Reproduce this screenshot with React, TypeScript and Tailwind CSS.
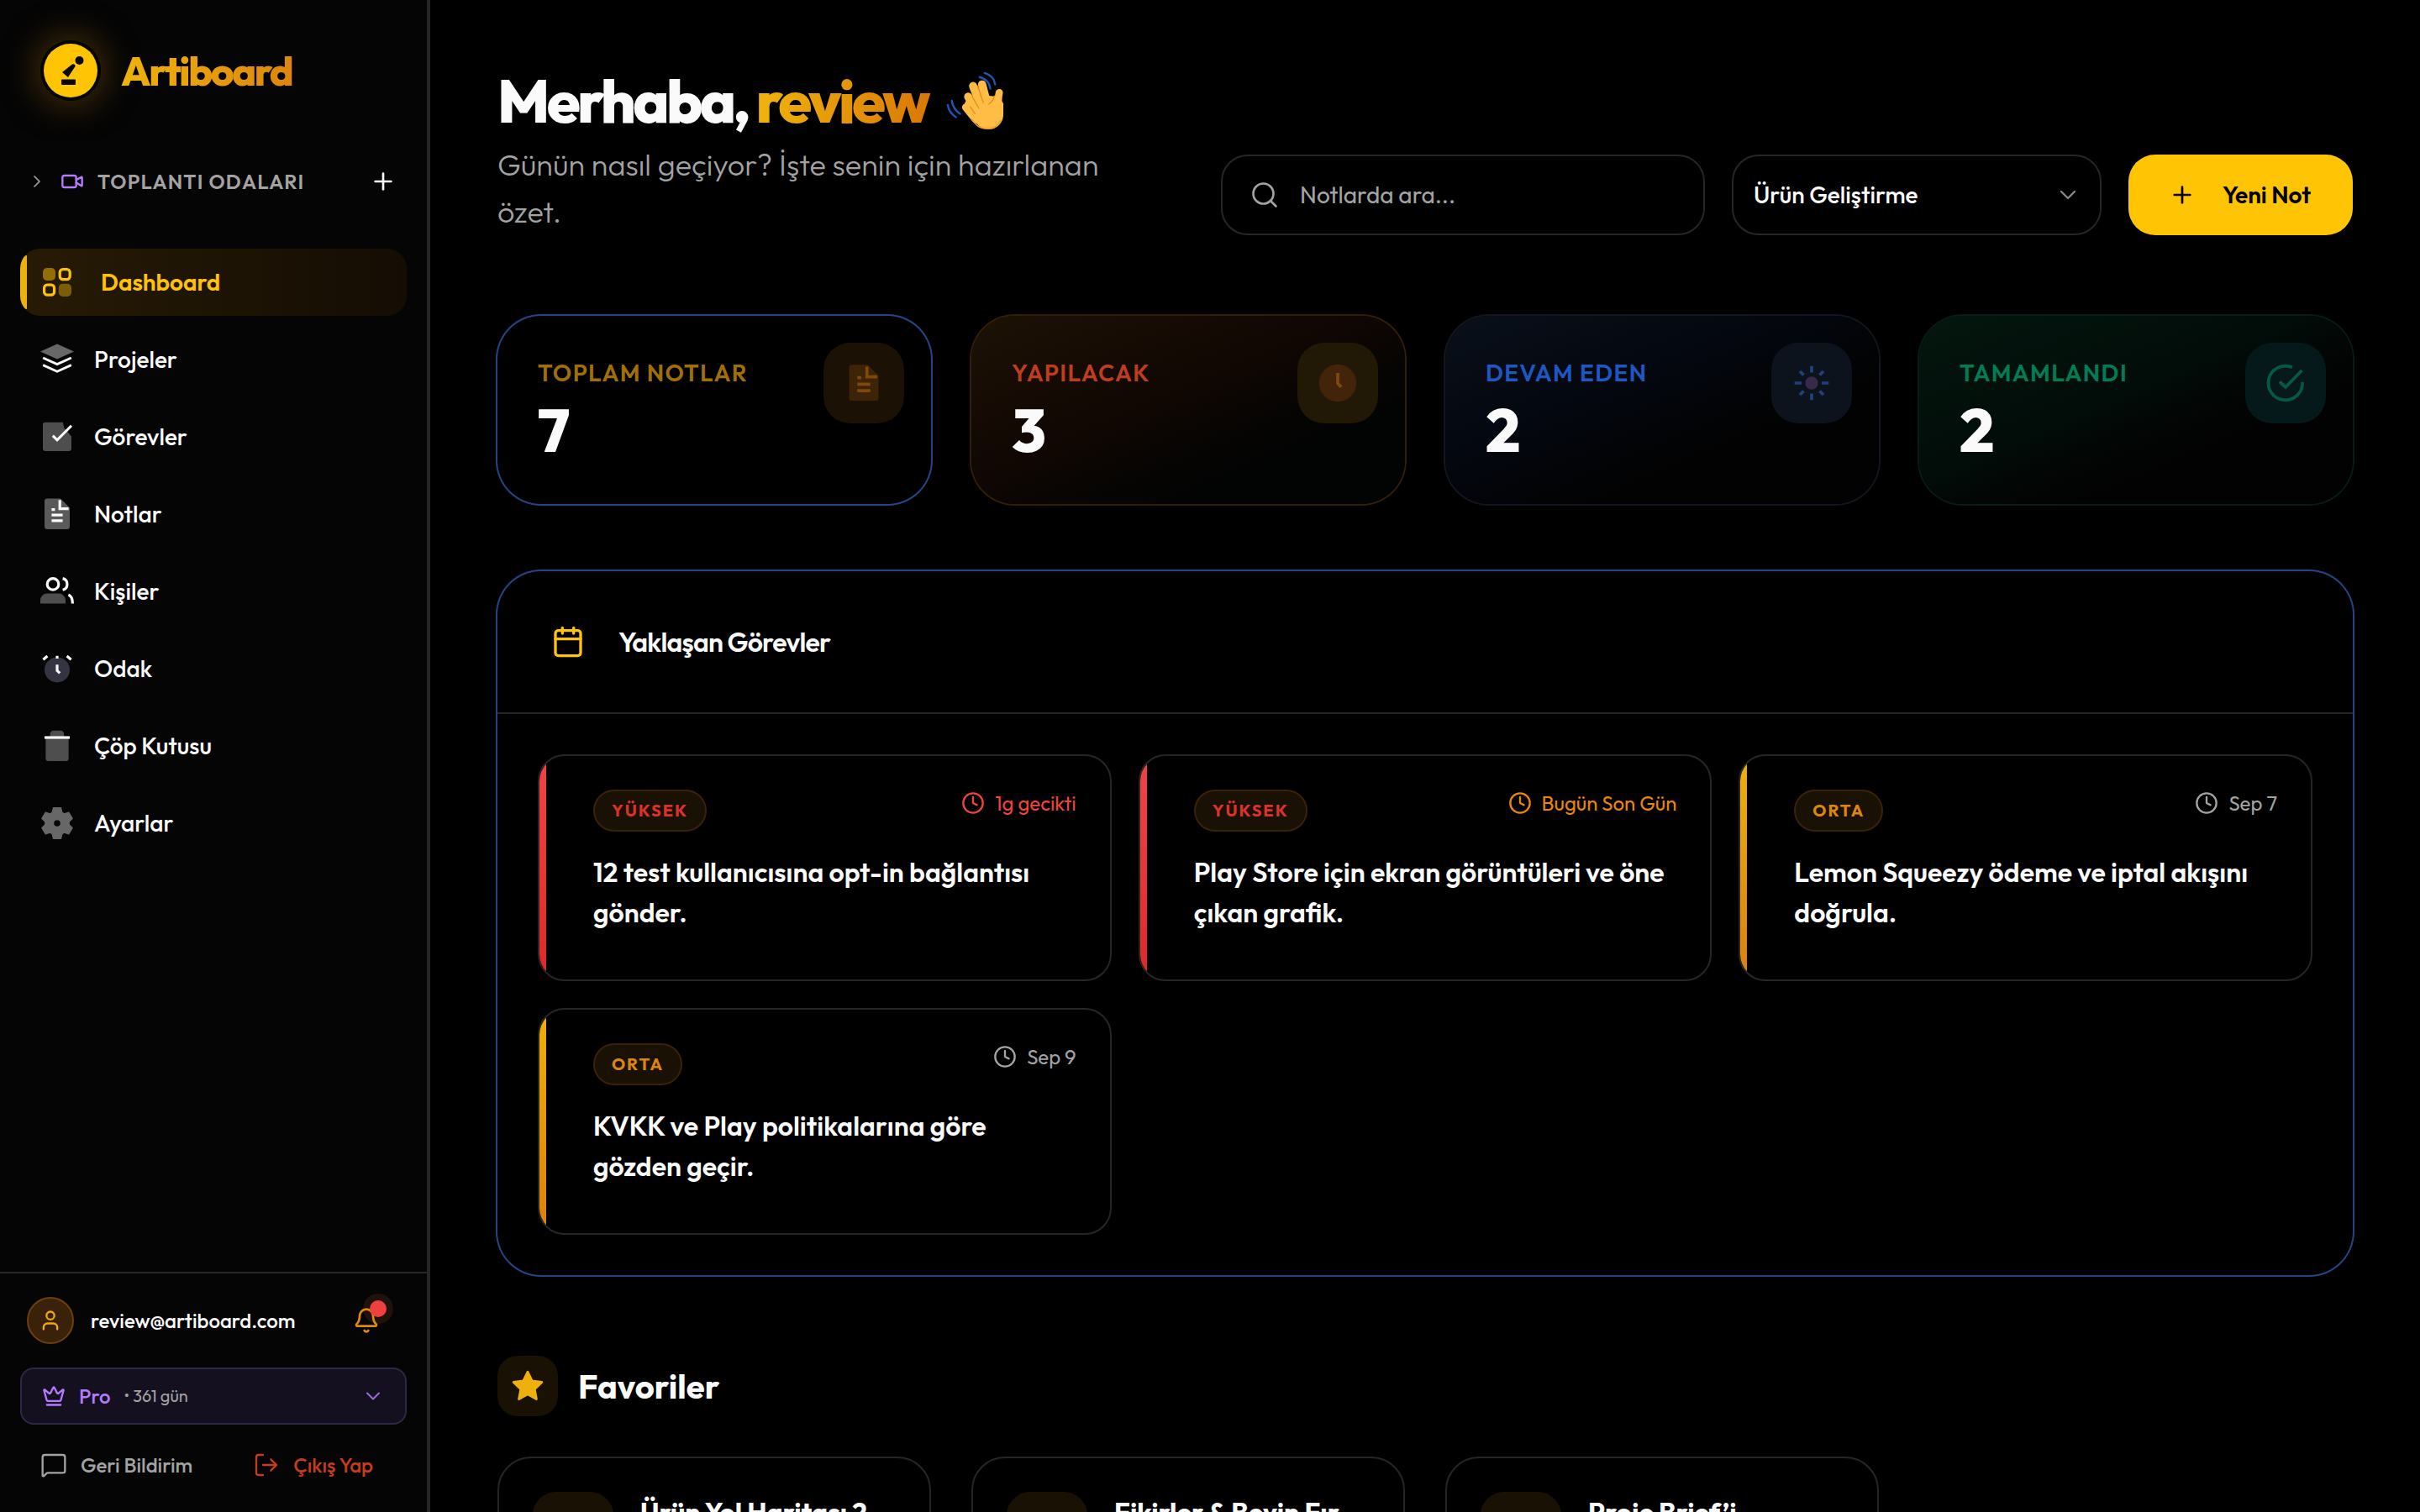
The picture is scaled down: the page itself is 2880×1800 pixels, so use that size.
import type { ReactNode } from 'react';
import {
  Bell,
  Calendar,
  ChevronDown,
  ChevronRight,
  Clock,
  Crown,
  LogOut,
  MessageSquare,
  Plus,
  Search,
  User,
  Video,
} from 'lucide-react';

function Duo({ size = 'size-12', children }: { size?: string; children: ReactNode }) {
  return (
    <svg viewBox="0 0 24 24" fill="none" stroke="none" aria-hidden="true" className={`${size} shrink-0`}>
      {children}
    </svg>
  );
}

const line = { stroke: 'currentColor', strokeWidth: 1.6, fill: 'none' };

function DashboardIcon() {
  return (
    <Duo>
      <rect x="3.5" y="3.5" width="7.5" height="7.5" rx="2.4" fill="currentColor" opacity="0.5" />
      <rect x="13.6" y="4.3" width="6" height="6" rx="1.8" {...line} />
      <rect x="4.3" y="13.6" width="6" height="6" rx="1.8" {...line} />
      <rect x="12.9" y="12.9" width="7.6" height="7.6" rx="2.4" fill="currentColor" opacity="0.4" />
    </Duo>
  );
}

function LayersIcon() {
  return (
    <Duo>
      <path d="M12 2.8 22 7.2 12 11.8 2 7.2Z" fill="currentColor" opacity="0.4" />
      <path d="m3.6 11 8.4 3.8 8.4-3.8M3.6 15.3l8.4 3.8 8.4-3.8" {...line} strokeWidth="1.4" />
    </Duo>
  );
}

function CheckIcon() {
  return (
    <Duo>
      <path
        d="M5 3.4h10.4l.8 3.3 2.6 3 1.7 2V19a1.5 1.5 0 0 1-1.5 1.5H5A1.5 1.5 0 0 1 3.5 19V5A1.5 1.5 0 0 1 5 3.4Z"
        fill="currentColor"
        opacity="0.3"
      />
      <path d="m9.4 11.3 2.6 2.6 8.5-8.5" {...line} strokeWidth="1.5" />
    </Duo>
  );
}

function NoteIcon({ size }: { size?: string }) {
  return (
    <Duo size={size}>
      <path
        d="M6 2.7h8l5.5 5.5v11.3A1.5 1.5 0 0 1 18 21H6a1.5 1.5 0 0 1-1.5-1.5V4.2A1.5 1.5 0 0 1 6 2.7Z"
        fill="currentColor"
        opacity="0.35"
      />
      <path d="M13.6 3.6v5.2h5.2M8.7 9.3h2M8.7 12.6h6.6M8.7 15.9h6.6" {...line} />
    </Duo>
  );
}

function PeopleIcon() {
  return (
    <Duo>
      <path d="M2 19.3v-2a4 4 0 0 1 4-4h7a4 4 0 0 1 4 4v2Z" fill="currentColor" opacity="0.3" />
      <circle cx="9.5" cy="7.7" r="3.4" {...line} />
      <path d="M15.3 4.3a3.5 3.5 0 0 1 0 6.8M18.7 14c1.5.6 2.5 2.3 2.5 5.3" {...line} />
    </Duo>
  );
}

function AlarmIcon() {
  return (
    <Duo>
      <circle cx="12" cy="12.7" r="7.5" fill="#a1a1d0" opacity="0.3" />
      <path d="M12 9.6v3.6l1.6 1.5M12 4.4V6M3.7 6.6l2.5-2.1M20.3 6.6l-2.5-2.1" {...line} />
    </Duo>
  );
}

function TrashIcon() {
  return (
    <Duo>
      <path
        d="M7.8 7V5a2.1 2.1 0 0 1 2.1-2.1H14A2.1 2.1 0 0 1 16.1 5v2h2.7v12.5a1.5 1.5 0 0 1-1.5 1.5H6.7a1.5 1.5 0 0 1-1.5-1.5V7Z"
        fill="currentColor"
        opacity="0.3"
      />
      <path d="M4.5 7h15" {...line} />
    </Duo>
  );
}

function GearIcon() {
  return (
    <Duo>
      <path
        fillRule="evenodd"
        clipRule="evenodd"
        d="M9.7 2.8h4.6l.6 2.8 1.3.8 2.7-.9 2.2 3.7-2 2v1.6l2 2-2.2 3.7-2.7-.9-1.3.8-.6 2.8H9.7l-.6-2.8-1.3-.8-2.7.9-2.2-3.7 2-2v-1.6l-2-2 2.2-3.7 2.7.9 1.3-.8Zm2.3 7a2.2 2.2 0 1 0 0 4.4 2.2 2.2 0 0 0 0-4.4Z"
        fill="currentColor"
        stroke="currentColor"
        strokeWidth="0.6"
        strokeLinejoin="round"
        opacity="0.4"
      />
    </Duo>
  );
}

function ClockDuo() {
  return (
    <Duo size="size-14">
      <circle cx="12" cy="12" r="9.5" fill="#43240a" />
      <path d="M12 6.9v5.3l1.8 1.8" stroke="#80480b" strokeWidth="1.6" />
    </Duo>
  );
}

function SunDuo() {
  return (
    <Duo size="size-14">
      <circle cx="12" cy="12" r="3.3" fill="#3a2a4a" />
      <path
        d="M12 3.3v3.3M12 17.4v3.3M3.3 12h3.5M17.2 12h3.5M6 6l1.9 1.9M16.1 16.1 18 18M6 18l1.9-1.9M16.1 7.9 18 6"
        stroke="#21407f"
        strokeWidth="1.6"
      />
    </Duo>
  );
}

function DoneDuo() {
  return (
    <Duo size="size-14">
      <path d="M20.6 11.5A8.7 8.7 0 1 1 15.4 4" stroke="#045a42" strokeWidth="1.6" />
      <path d="m9 11.3 3 2.9 8.3-8.6" stroke="#045a42" strokeWidth="1.6" />
    </Duo>
  );
}

function WavingHand() {
  return (
    <svg viewBox="0 0 74 76" fill="none" strokeLinecap="round" aria-hidden="true" className="h-19 w-18 shrink-0">
      <g stroke="#1e56b5" strokeWidth="2.5">
        <path d="M49 4c7 2 12 7 13 14M43 9c7 2 12 7 13 14" />
        <path d="M9 38c1 7 4 12 10 16M4 43c1 7 4 11 10 15" />
      </g>
      <path d="M24 45c0-10 14-15 24-14l18 2 6 8v14c0 10-8 18-18 18-9 0-13-5-18-11Z" fill="#ffbd45" />
      <g stroke="#ffbd45" strokeWidth="10">
        <path d="m46 18 7 27" />
        <path d="m35 20 11 28" />
        <path d="m29 33 13 22" />
        <path d="m26 46 12 15" strokeWidth="9" />
        <path d="M67 28c-2 8-1 16-1 24" strokeWidth="9" />
      </g>
      <g stroke="#e8921a" strokeWidth="1.5">
        <path d="m40.5 20 7 20M34 33l8 14M31.5 45l6 9M61 32c-1 5-3 8-7 10" />
      </g>
      <path d="M33 60c5 7 9 12 19 12 8 0 14-4 17-10" stroke="#f09b2a" strokeWidth="1.5" />
    </svg>
  );
}

function LogoMark() {
  return (
    <svg viewBox="0 0 72 72" aria-hidden="true" className="size-18 rounded-full shadow-[0_0_40px_4px_#4a310a]">
      <circle cx="36" cy="36" r="36" fill="#050505" />
      <circle cx="36" cy="36" r="32" fill="#ffc403" />
      <circle cx="46.5" cy="24" r="5" fill="#0a0700" />
      <path d="m26 38 12-9.5c2-1 4 1 3.5 2.5L33 44Z" fill="#0a0700" />
      <rect x="25" y="46.5" width="17" height="6.5" rx="1" fill="#0a0700" />
    </svg>
  );
}

const navItems = [
  { label: 'Projeler', icon: <LayersIcon /> },
  { label: 'Görevler', icon: <CheckIcon /> },
  { label: 'Notlar', icon: <NoteIcon /> },
  { label: 'Kişiler', icon: <PeopleIcon /> },
  { label: 'Odak', icon: <AlarmIcon /> },
  { label: 'Çöp Kutusu', icon: <TrashIcon /> },
  { label: 'Ayarlar', icon: <GearIcon /> },
];

function Sidebar() {
  return (
    <aside className="flex w-128 shrink-0 flex-col border-r-4 border-[#262626] bg-[#050505]">
      <div className="flex items-center gap-6 px-12 pt-12">
        <LogoMark />
        <span className="bg-linear-to-r from-[#efb30c] to-[#dd850d] bg-clip-text pr-1 text-5xl font-extrabold tracking-tighter text-transparent">
          Artiboard
        </span>
      </div>

      <div className="mt-18 flex h-12 items-center px-8">
        <button type="button" className="flex items-center text-[#a3a3a3]">
          <ChevronRight className="size-6" strokeWidth={1.75} />
          <Video className="ml-4 size-7 text-[#b57bff]" strokeWidth={2} />
          <span className="ml-4 text-2xl font-semibold tracking-wider">TOPLANTI ODALARI</span>
        </button>
        <button type="button" aria-label="Oda ekle" className="mr-1 ml-auto text-white">
          <Plus className="size-8" strokeWidth={2} />
        </button>
      </div>

      <nav className="mt-14 flex flex-col gap-3 px-6 text-[28px]">
        <a
          href="#dashboard"
          className="relative flex h-20 items-center gap-7 overflow-hidden rounded-3xl bg-linear-to-r from-[#271b05] to-[#150d04] px-5 font-semibold text-[#ffc20a]"
        >
          <span className="absolute inset-y-2 left-0 w-2 rounded-l-full bg-[#eeb00b]" />
          <DashboardIcon />
          Dashboard
        </a>
        {navItems.map((item) => (
          <a
            key={item.label}
            href={`#${item.label}`}
            className="flex h-20 items-center gap-5 rounded-3xl px-5 font-medium text-[#fafafa]"
          >
            {item.icon}
            {item.label}
          </a>
        ))}
      </nav>

      <div className="mt-auto border-t-2 border-[#262626] px-6 pt-7 pb-8">
        <div className="flex items-center pr-8 pl-2">
          <span className="flex size-14 items-center justify-center rounded-full border-2 border-[#704008] bg-[#3a210a] text-[#f0a90a]">
            <User className="size-7" strokeWidth={2} />
          </span>
          <span className="ml-5 text-2xl font-medium text-[#fafafa]">review@artiboard.com</span>
          <button type="button" aria-label="Bildirimler" className="relative ml-auto text-[#e08a0b]">
            <span className="absolute -top-4 -right-4 size-9 rounded-full bg-[#1f120b]" />
            <Bell className="relative size-8" strokeWidth={2} />
            <span className="absolute -top-2 -right-2 size-5 rounded-full bg-[#ef4040]" />
          </button>
        </div>
        <button
          type="button"
          className="mt-7 flex h-17 w-full items-center rounded-2xl border-2 border-[#302745] bg-[#15101f] px-6"
        >
          <Crown className="size-7 text-[#b57bff]" strokeWidth={2} />
          <span className="ml-4 text-2xl font-medium text-[#b57bff]">Pro</span>
          <span className="ml-4 text-xl text-[#a3a3a3]">• 361 gün</span>
          <ChevronDown className="ml-auto size-7 text-[#9a6bd8]" strokeWidth={1.75} />
        </button>
        <div className="mt-6 flex h-12 items-center justify-between pr-10 pl-6 text-2xl font-medium">
          <button type="button" className="flex items-center gap-4 text-[#a3a3a3]">
            <MessageSquare className="size-8" strokeWidth={1.75} />
            Geri Bildirim
          </button>
          <button type="button" className="flex items-center gap-4 text-[#c83c1c]">
            <LogOut className="size-8" strokeWidth={1.75} />
            Çıkış Yap
          </button>
        </div>
      </div>
    </aside>
  );
}

const stats = [
  {
    label: 'TOPLAM NOTLAR',
    value: 7,
    card: 'ring-[#234585] bg-black',
    text: 'text-[#a06f08]',
    box: 'bg-[#1b1205] text-[#80480b]',
    icon: <NoteIcon size="size-14" />,
  },
  {
    label: 'YAPILACAK',
    value: 3,
    card: 'ring-[#331e07] bg-linear-to-br from-[#1d1205] via-[#100703] via-45% to-[#020303] to-75%',
    text: 'text-[#bd3e1c]',
    box: 'bg-[#211905]',
    icon: <ClockDuo />,
  },
  {
    label: 'DEVAM EDEN',
    value: 2,
    card: 'ring-[#14151f] bg-linear-to-br from-[#0a101a] via-[#03060d] via-45% to-[#020202] to-70%',
    text: 'text-[#1f56c0]',
    box: 'bg-[#0c131c]',
    icon: <SunDuo />,
  },
  {
    label: 'TAMAMLANDI',
    value: 2,
    card: 'ring-[#081a19] bg-linear-to-br from-[#04170f] via-[#020c08] via-45% to-[#020202] to-70%',
    text: 'text-[#047a56]',
    box: 'bg-[#05181a]',
    icon: <DoneDuo />,
  },
];

function StatCards() {
  return (
    <section className="mt-24 grid grid-cols-4 gap-12">
      {stats.map((s) => (
        <div key={s.label} className={`flex h-56 justify-between rounded-[52px] p-8 pl-12 ring-2 ${s.card}`}>
          <div className="pt-5">
            <div className={`text-[28px] leading-8 font-semibold tracking-wider ${s.text}`}>{s.label}</div>
            <div className="mt-4 text-7xl font-extrabold text-[#fafafa]">{s.value}</div>
          </div>
          <div className={`flex size-24 items-center justify-center rounded-[32px] ${s.box}`}>{s.icon}</div>
        </div>
      ))}
    </section>
  );
}

const priorities = {
  high: { label: 'YÜKSEK', text: 'text-[#dc3328]', bar: 'bg-linear-to-b from-[#f04444] to-[#dc2828]' },
  mid: { label: 'ORTA', text: 'text-[#dc860b]', bar: 'bg-linear-to-b from-[#eeb00b] to-[#dc800b]' },
};

interface Task {
  title: string;
  priority: keyof typeof priorities;
  due: string;
  dueColor: string;
}

const tasks: Task[] = [
  { title: '12 test kullanıcısına opt-in bağlantısı gönder.', priority: 'high', due: '1g gecikti', dueColor: 'text-[#ef4438]' },
  { title: 'Play Store için ekran görüntüleri ve öne çıkan grafik.', priority: 'high', due: 'Bugün Son Gün', dueColor: 'text-[#ea860c]' },
  { title: 'Lemon Squeezy ödeme ve iptal akışını doğrula.', priority: 'mid', due: 'Sep 7', dueColor: 'text-[#a3a3a3]' },
  { title: 'KVKK ve Play politikalarına göre gözden geçir.', priority: 'mid', due: 'Sep 9', dueColor: 'text-[#a3a3a3]' },
];

function TaskCard({ task }: { task: Task }) {
  const p = priorities[task.priority];
  return (
    <article className="relative min-h-[270px] overflow-hidden rounded-[32px] border-2 border-[#262626] py-10 pr-10 pl-16">
      <span className={`absolute inset-y-0 left-0 w-2 ${p.bar}`} />
      <div className="flex items-start justify-between">
        <span
          className={`flex h-[50px] items-center rounded-full border-2 border-[#3a210a] bg-[#1a1105] px-5 text-xl font-bold tracking-widest ${p.text}`}
        >
          {p.label}
        </span>
        <span className={`flex items-center gap-3 text-2xl font-normal ${task.dueColor}`}>
          <Clock className="size-7" strokeWidth={2} />
          {task.due}
        </span>
      </div>
      <h3 className="mt-6 text-[32px] leading-12 font-semibold text-[#fafafa]">{task.title}</h3>
    </article>
  );
}

const favorites = ['Ürün Yol Haritası 2026', 'Fikirler & Beyin Fırtınası', 'Proje Brief’i'];

export default function App() {
  return (
    <div className="flex h-screen overflow-hidden bg-black font-['Outfit','Lato',sans-serif]">
      <Sidebar />
      <main className="min-w-0 flex-1 overflow-y-auto px-20 pt-20 [scrollbar-width:none]">
        <header className="flex items-end gap-8">
          <div className="min-w-0 flex-1">
            <h1 className="mb-2 flex h-20 items-center gap-4 text-7xl leading-20 font-extrabold tracking-tighter whitespace-nowrap text-[#fafafa]">
              <span>
                Merhaba,{' '}
                <span className="bg-linear-to-r from-[#f0b40c] to-[#d97706] bg-clip-text pr-1 text-transparent">
                  review
                </span>
              </span>
              <WavingHand />
            </h1>
            <p className="max-w-[760px] text-4xl leading-14 font-light text-[#a3a3a3]">
              Günün nasıl geçiyor? İşte senin için hazırlanan özet.
            </p>
          </div>
          <label className="flex h-24 w-144 items-center gap-6 rounded-[32px] border-2 border-[#262626] px-8 text-[#a3a3a3]">
            <Search className="size-9 shrink-0" strokeWidth={1.75} />
            <input
              type="search"
              aria-label="Notlarda ara"
              placeholder="Notlarda ara..."
              className="w-full bg-transparent text-[28px] outline-none placeholder:text-[#a3a3a3]"
            />
          </label>
          <div className="relative w-110">
            <select
              aria-label="Çalışma alanı"
              className="h-24 w-full appearance-none rounded-[32px] border-2 border-[#262626] bg-black px-6 text-[28px] font-medium text-[#fafafa]"
            >
              <option>Ürün Geliştirme</option>
            </select>
            <ChevronDown
              className="pointer-events-none absolute top-8 right-6 size-8 text-[#8a8a8a]"
              strokeWidth={1.75}
            />
          </div>
          <button
            type="button"
            className="flex h-24 min-w-[267px] items-center gap-8 rounded-[32px] bg-[#ffc403] px-12 text-[28px] font-semibold whitespace-nowrap text-black"
          >
            <Plus className="size-8" strokeWidth={2} />
            Yeni Not
          </button>
        </header>

        <StatCards />

        <section className="mt-20 rounded-[52px] ring-2 ring-[#234585]">
          <div className="flex h-[170px] items-center gap-10 border-b-2 border-[#262626] px-16">
            <Calendar className="size-10 text-[#ffc403]" strokeWidth={2} />
            <h2 className="text-[32px] font-semibold tracking-tight text-[#fafafa]">Yaklaşan Görevler</h2>
          </div>
          <div className="grid grid-cols-3 gap-8 p-12">
            {tasks.map((t) => (
              <TaskCard key={t.title} task={t} />
            ))}
          </div>
        </section>

        <section className="mt-24">
          <div className="flex items-center gap-6">
            <span className="flex size-18 items-center justify-center rounded-3xl bg-[#1a1105]">
              <svg viewBox="0 0 24 24" aria-hidden="true" className="size-11">
                <path
                  d="m12 2.8 2.8 5.9 6.4.8-4.7 4.5 1.2 6.5-5.7-3.2-5.7 3.2 1.2-6.5L2.8 9.5l6.4-.8Z"
                  fill="#eeb00b"
                  stroke="#eeb00b"
                  strokeWidth="1.5"
                  strokeLinejoin="round"
                />
              </svg>
            </span>
            <h2 className="text-[40px] font-bold text-[#fafafa]">Favoriler</h2>
          </div>
          <div className="mt-12 grid grid-cols-4 gap-12">
            {favorites.map((f) => (
              <article key={f} className="flex h-80 gap-8 rounded-[40px] border-2 border-[#262626] p-10">
                <span className="size-24 shrink-0 rounded-[28px] bg-[#1a1105]" />
                <h3 className="min-w-0 truncate text-[32px] leading-12 font-bold text-[#fafafa]">{f}</h3>
              </article>
            ))}
          </div>
        </section>
      </main>
    </div>
  );
}
